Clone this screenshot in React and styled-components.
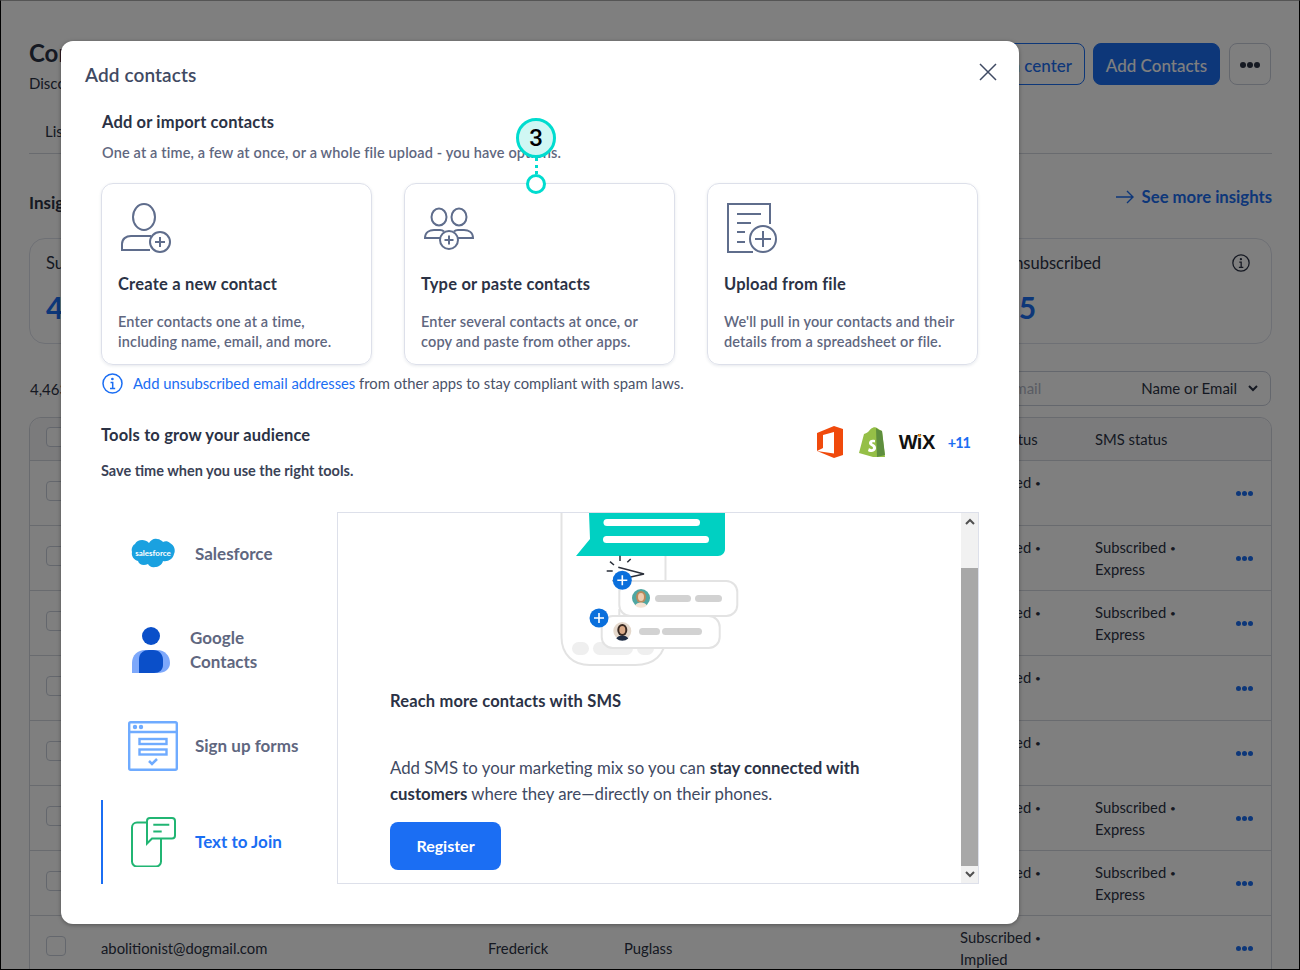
import React from "react";
import styled, { createGlobalStyle } from "styled-components";

const Global = createGlobalStyle`
  html, body { margin: 0; padding: 0; background: #fff; }
  body { font-family: Lato, "Noto Sans", "Liberation Sans", sans-serif; color: #2b3245; }
  * { box-sizing: border-box; }
`;

const Screen = styled.div`
  position: relative; width: 1300px; height: 970px; overflow: hidden;
  border: 1px solid #000; border-top-color: #555; padding: 0 27px 0 28px; background: #fff;
`;
const PageHeader = styled.header`
  display: flex; justify-content: space-between; height: 42px; margin-top: 42px; padding-right: 1px;
`;
const PageTitleBlock = styled.div` margin-top: -1px; `;
const PageTitle = styled.h1` margin: 0; font-size: 24px; line-height: 22px; font-weight: 700; color: #2b3245; `;
const PageSub = styled.p` margin: 9px 0 0; font-size: 15px; line-height: 20px; color: #2b3245; `;
const PageActions = styled.div` display: flex; gap: 8px; `;
const PageButton = styled.button`
  height: 42px; width: ${p => (p.$solid ? "127px" : "auto")}; border-radius: 8px; padding: 2px ${p => (p.$solid ? 0 : 12)}px 0;
  font: 500 17px Lato, sans-serif; white-space: nowrap;
  border: 1px solid #1b6ef3; color: ${p => (p.$solid ? "#fff" : "#1b6ef3")};
  background: ${p => (p.$solid ? "#1b6ef3" : "#fff")};
`;
const MoreButton = styled.button`
  width: 42px; height: 42px; margin-left: 1px; border: 1px solid #c9cedb; border-radius: 8px; background: #fff;
  display: flex; align-items: center; justify-content: center; gap: 1px; padding: 2px 0 0;
`;
const Dot = styled.i`
  width: ${p => p.$s || 6}px; height: ${p => p.$s || 6}px; border-radius: 50%; background: ${p => p.$c || "#2b3245"};
`;
const Tabs = styled.nav`
  height: 69px; padding: 34px 0 0 16px; border-bottom: 1px solid #d3d6df; font-size: 15px; line-height: 24px;
`;
const InsightsHead = styled.div` display: flex; justify-content: space-between; align-items: flex-start; margin-top: 31px; `;
const InsightsTitle = styled.h2` margin: 6px 0 0; font-size: 17px; line-height: 24px; font-weight: 700; `;
const SeeMore = styled.a`
  display: flex; align-items: center; gap: 8px; font-size: 16.7px; line-height: 24px; font-weight: 700; color: #1b6ef3;
`;
const StatGrid = styled.section` display: grid; grid-template-columns: repeat(4, 1fr); gap: 32px; margin-top: 23px; `;
const StatCard = styled.div`
  position: relative; height: 106px; padding: 12px 16px; border: 1px solid #dde0ea; border-radius: 16px;
`;
const StatLabel = styled.div` font-size: 16.5px; line-height: 24px; `;
const StatValue = styled.div` margin-top: 14px; font-size: 30px; line-height: 36px; font-weight: 700; letter-spacing: -1px; color: #1b6ef3; `;
const StatInfo = styled.span` position: absolute; right: 21px; top: 15px; display: flex; `;
const SearchRow = styled.div` display: flex; justify-content: space-between; margin-top: 27px; height: 35px; padding-right: 1px; `;
const CountText = styled.span` font-size: 15px; line-height: 36px; padding-left: 1px; `;
const SearchBox = styled.div`
  width: 383px; border: 1px solid #c9cedb; border-radius: 8px; display: flex; align-items: center;
  justify-content: space-between; padding: 0 12px 1px; font-size: 15px;
`;
const Placeholder = styled.span` color: #b4b9c7; `;
const SelectValue = styled.span` display: flex; align-items: center; gap: 11px; `;
const Table = styled.div` margin-top: 11px; border: 1px solid #d3d6df; border-radius: 12px 12px 0 0; `;
const Row = styled.div`
  display: grid; grid-template-columns: 71px 387px 136px 336px 135px 141px 1fr; align-items: center;
  height: ${p => (p.$head ? "43px" : "65px")}; border-bottom: 1px solid #d3d6df; font-size: 14.8px; line-height: 21px;
  background: ${p => (p.$head ? "#f6f7f9" : "#fff")}; border-radius: ${p => (p.$head ? "12px 12px 0 0" : "0")};
`;
const CheckBox = styled.span` width: 20px; height: 20px; margin: 0 0 4px 16px; border: 1px solid #c9cedb; border-radius: 4px; background: #fff; `;
const Cell = styled.span``;
const Bullet = styled.span` font-size: 10px; vertical-align: 1px; `;
const RowDots = styled.span` display: flex; gap: 1px; `;

const Overlay = styled.div`
  position: absolute; inset: 0; background: rgba(0, 0, 0, 0.5); padding: 40px 0 0 60px;
`;
const Modal = styled.div`
  position: relative; width: 958px; height: 883px; background: #fff; border-radius: 12px;
  box-shadow: 0 1px 4px rgba(0,0,0,.35);
`;
const ModalHeader = styled.div` display: flex; justify-content: space-between; align-items: center; height: 68px; padding: 0 22px 2px 24px; `;
const ModalTitle = styled.h2` margin: 0; font-size: 19px; font-weight: 600; letter-spacing: .1px; color: #3f4a63; `;
const CloseButton = styled.button` border: 0; background: none; padding: 0; margin-top: -5px; display: flex; `;
const ModalBody = styled.div` padding: 0 40px; `;
const SectionTitle = styled.h3`
  margin: 0; padding: 1px 0 0 ${p => (p.$inset ? 1 : 0)}px; font-size: 16.5px; line-height: 25px; font-weight: 700; letter-spacing: .15px; color: #2b3245;
`;
const SectionDesc = styled.p` margin: 8px 0 0; padding-left: 1px; font-size: 14.5px; line-height: 20px; font-weight: 600; letter-spacing: .15px; color: #5f6780; `;
const Options = styled.div` display: grid; grid-template-columns: repeat(3, 271px); gap: 32px; margin-top: 20px; `;
const OptionCard = styled.div`
  height: 182px; padding: 18px 16px 0; border: 1px solid #dde0ea; border-radius: 12px; box-shadow: 0 1px 3px rgba(60,70,110,.12);
`;
const OptionIcon = styled.svg` display: block; margin-left: 2px; `;
const OptionTitle = styled.h4` margin: 18px 0 0; padding-top: 1px; font-size: 16.5px; line-height: 23px; font-weight: 700; letter-spacing: .2px; color: #2b3245; `;
const OptionDesc = styled.p` margin: 16px 0 0; font-size: 14.5px; line-height: 20px; font-weight: 600; letter-spacing: .15px; color: #5f6780; `;
const InfoLine = styled.div` display: flex; align-items: center; gap: 10px; height: 22px; margin-top: 8px; padding: 0 0 2px 1px; font-size: 14.8px; color: #4a5268; `;
const InlineLink = styled.a` color: #1b6ef3; `;
const ToolsHead = styled.div` display: flex; justify-content: space-between; height: 36px; margin-top: 27px; `;
const Logos = styled.div` display: flex; align-items: center; gap: 14px; padding: 4px 9px 0 0; `;
const WixMark = styled.span` font: 700 20px "Liberation Sans", sans-serif; color: #111; letter-spacing: -.5px; margin: 1px 0 0 -1px; `;
const WixI = styled.span`
  position: relative;
  &::after { content: ""; position: absolute; left: 1.500px; top: 3px; width: 3px; height: 3px; border-radius: 50%; background: #f7941d; }
`;
const MoreCount = styled.span` font-size: 14.5px; font-weight: 700; letter-spacing: -1px; color: #1b6ef3; margin: 1px 0 0 -1px; `;
const ToolsDesc = styled.p` margin: 3px 0 0; font-size: 14.5px; line-height: 20px; font-weight: 700; color: #3a4256; `;
const Tools = styled.div` display: grid; grid-template-columns: 236px 642px; height: 372px; margin-top: 31px; `;
const ToolList = styled.div` display: flex; flex-direction: column; gap: 12px; `;
const ToolRow = styled.div`
  display: flex; align-items: center; height: 84px; border-left: 2px solid ${p => (p.$active ? "#1b6ef3" : "transparent")};
  font-size: 17px; font-weight: 700; color: ${p => (p.$active ? "#1b6ef3" : "#5f6780")};
`;
const ToolLabel = styled.span` line-height: 24px; `;
const ToolIcon = styled.span`
  display: flex; justify-content: center; width: 50px;
  margin: 0 ${p => (p.$tight ? 14 : 17)}px 0 ${p => (p.$tight ? 23 : 25)}px;
`;
const Panel = styled.div` display: flex; border: 1px solid #dde0ea; overflow: hidden; `;
const PanelContent = styled.div` flex: 1; min-width: 0; `;
const Art = styled.svg` display: block; margin-left: 222px; `;
const PanelText = styled.div` padding-left: 52px; `;
const PanelHeading = styled.h4` margin: 21px 0 0; padding-top: 1px; font-size: 16.5px; line-height: 23px; font-weight: 700; letter-spacing: .15px; color: #2b3245; `;
const PanelPara = styled.p` margin: 42px 0 0; font-size: 16.8px; line-height: 26px; color: #3f4a63; b { font-weight: 700; color: #2b3245; } `;
const RegisterButton = styled.button`
  display: block; width: 111px; height: 48px; margin-top: 15px; padding: 0 0 2px; border: 0; border-radius: 8px; background: #1b6ef3; color: #fff;
  font: 700 16px Lato, sans-serif;
`;
const ScrollBar = styled.div` flex: 0 0 17px; background: #f1f1f1; display: flex; flex-direction: column; justify-content: space-between; `;
const ScrollArrow = styled.span` height: 17px; display: flex; align-items: center; justify-content: center; `;
const ScrollTrack = styled.div` flex: 1; padding-top: 38px; `;
const ScrollThumb = styled.div` height: 298px; background: #a8a8a8; `;

const CalloutWrap = styled.div`
  position: absolute; left: 455px; top: 77px; width: 40px; display: flex; flex-direction: column; align-items: center;
`;
const CalloutBadge = styled.div`
  width: 40px; height: 40px; border-radius: 50%; border: 3px solid #00dccf; background: #d0f7f4; color: #000;
  font: 500 24px/34px Roboto, sans-serif; text-align: center; position: relative; z-index: 1;
`;
const CalloutLine = styled.div` height: 16px; border-left: 3px dotted #00dccf; `;
const CalloutDot = styled.div` width: 20px; height: 20px; border-radius: 50%; border: 3px solid #00dccf; background: #fff; `;

const rows = [
  { status: "Implied" }, { status: "Implied", sms: true }, { status: "Implied", sms: true }, { status: "Implied" },
  { status: "Implied" }, { status: "Implied", sms: true }, { status: "Implied", sms: true },
  { email: "abolitionist@dogmail.com", first: "Frederick", last: "Puglass", status: "Implied" },
];

const stroke = { fill: "none", stroke: "#5f6d8c", strokeWidth: 2 };

function InfoIcon({ size = 21, color = "#1b6ef3" }) {
  return (
    <svg width={size} height={size} viewBox="0 0 21 21" fill="none" stroke={color} strokeWidth="1.5">
      <circle cx="10.5" cy="10.5" r="9.5" />
      <path d="M8.5 9.5h2.2v6M8 15.5h5.2" />
      <circle cx="10.4" cy="6" r=".6" fill={color} />
    </svg>
  );
}

function Avatar({ cx, cy, bg, hair, skin, shirt }) {
  return (
    <g>
      <circle cx={cx} cy={cy} r="9" fill={bg} />
      <ellipse cx={cx} cy={cy - 1} rx="5" ry="6" fill={hair} />
      <ellipse cx={cx} cy={cy - 1} rx="3" ry="4" fill={skin} />
      <path d={`M${cx - 6} ${cy + 7.5}c2-4 10-4 12 0a9 9 0 0 1-12 0z`} fill={shirt} />
    </g>
  );
}

function PlusBadge({ cx, cy }) {
  return (
    <g>
      <circle cx={cx} cy={cy} r="9.5" fill="#0a6fdc" />
      <path d={`M${cx - 5} ${cy}h10M${cx} ${cy - 5}v10`} stroke="#fff" strokeWidth="1.6" />
    </g>
  );
}

function SmsArt() {
  return (
    <Art width="180" height="155" viewBox="0 0 180 155">
      <path d="M1.500 0v124c0 18 12 28 28 28h46c18 0 30-10 30-28V36" fill="none" stroke="#e3e3e3" strokeWidth="2" />
      <g fill="#efefef">
        <rect x="12" y="129" width="17" height="13" rx="6.5" />
        <rect x="33" y="129" width="40" height="13" rx="6.5" />
        <rect x="77" y="129" width="17" height="13" rx="6.5" />
      </g>
      <path d="M29 0h136v36c0 4-3 7-7 7H16l14-17z" fill="#00d0c2" />
      <rect x="43.500" y="6" width="96.500" height="7" rx="3.500" fill="#fff" />
      <rect x="43" y="23" width="106" height="7" rx="3.500" fill="#fff" />
      <path d="M60 42.700V48M50 48.700l4 3.300M67.300 49.300l3.400-3.300M46.700 58h6M58.300 54.300L84 61 52.700 68" fill="none" stroke="#2a2f3a" strokeWidth="1.5" />
      <rect x="59.300" y="68" width="118" height="35" rx="11" fill="#fff" stroke="#e3e3e3" strokeWidth="2" />
      <rect x="41.700" y="103" width="118" height="32" rx="11" fill="#fff" stroke="#e3e3e3" strokeWidth="2" />
      <path d="M59.300 96v7" stroke="#e3e3e3" strokeWidth="2" />
      <rect x="95" y="82" width="36" height="7" rx="3.5" fill="#d2d2d2" />
      <rect x="135" y="82" width="27" height="7" rx="3.5" fill="#d2d2d2" />
      <rect x="79" y="115" width="21" height="7" rx="3.5" fill="#d2d2d2" />
      <rect x="102" y="115" width="40" height="7" rx="3.5" fill="#d2d2d2" />
      <Avatar cx={81} cy={85} bg="#4fa7a2" hair="#b98a5c" skin="#f0cdb0" shirt="#f4e3d4" />
      <Avatar cx={62.3} cy={118} bg="#e4d8cc" hair="#3a2a22" skin="#d9a987" shirt="#1e2c44" />
      <PlusBadge cx={62.3} cy={67.3} />
      <PlusBadge cx={39} cy={105} />
    </Art>
  );
}

function Subscribed() {
  return <>Subscribed <Bullet>•</Bullet></>;
}

export default function App() {
  return (
    <>
      <Global />
      <Screen>
        <PageHeader>
          <PageTitleBlock>
            <PageTitle>Contacts</PageTitle>
            <PageSub>Discover and manage your contacts</PageSub>
          </PageTitleBlock>
          <PageActions>
            <PageButton>Action center</PageButton>
            <PageButton $solid>Add Contacts</PageButton>
            <MoreButton><Dot /><Dot /><Dot /></MoreButton>
          </PageActions>
        </PageHeader>
        <Tabs>Lists</Tabs>
        <InsightsHead>
          <InsightsTitle>Insights</InsightsTitle>
          <SeeMore>
            <svg width="18" height="14" viewBox="0 0 18 14" fill="none" stroke="#1b6ef3" strokeWidth="1.4"><path d="M0 7h17M11 1l6 6-6 6" /></svg>
            See more insights
          </SeeMore>
        </InsightsHead>
        <StatGrid>
          <StatCard><StatLabel>Subscribed</StatLabel><StatValue>4,123</StatValue></StatCard>
          <StatCard />
          <StatCard />
          <StatCard>
            <StatLabel>Unsubscribed</StatLabel><StatValue>25</StatValue>
            <StatInfo><InfoIcon size={18} color="#2b3245" /></StatInfo>
          </StatCard>
        </StatGrid>
        <SearchRow>
          <CountText>4,463 contacts</CountText>
          <SearchBox>
            <Placeholder>Search name or email</Placeholder>
            <SelectValue>
              Name or Email
              <svg width="10" height="7" viewBox="0 0 10 7" fill="none" stroke="#2b3245" strokeWidth="2"><path d="M1 1l4 4 4-4" /></svg>
            </SelectValue>
          </SearchBox>
        </SearchRow>
        <Table>
          <Row $head>
            <CheckBox /><Cell /><Cell /><Cell /><Cell>Email status</Cell><Cell>SMS status</Cell><Cell />
          </Row>
          {rows.map((r, i) => (
            <Row key={i}>
              <CheckBox />
              <Cell>{r.email}</Cell>
              <Cell>{r.first}</Cell>
              <Cell>{r.last}</Cell>
              <Cell><Subscribed /><br />{r.status}</Cell>
              <Cell>{r.sms ? <><Subscribed /><br />Express</> : null}</Cell>
              <RowDots><Dot $s={5} $c="#1b6ef3" /><Dot $s={5} $c="#1b6ef3" /><Dot $s={5} $c="#1b6ef3" /></RowDots>
            </Row>
          ))}
        </Table>

        <Overlay>
          <Modal>
            <ModalHeader>
              <ModalTitle>Add contacts</ModalTitle>
              <CloseButton aria-label="Close">
                <svg width="18" height="18" viewBox="0 0 18 18" stroke="#3f4a63" strokeWidth="1.5"><path d="M1 1l16 16M17 1L1 17" /></svg>
              </CloseButton>
            </ModalHeader>
            <ModalBody>
              <SectionTitle $inset>Add or import contacts</SectionTitle>
              <SectionDesc>One at a time, a few at once, or a whole file upload - you have options.</SectionDesc>
              <Options>
                <OptionCard>
                  <OptionIcon width="52" height="52" viewBox="0 0 52 52" {...stroke}>
                    <ellipse cx="24" cy="15" rx="11" ry="13" />
                    <path d="M30 48H2v-6c0-5 4-8 9-8h20" />
                    <circle cx="40" cy="40" r="10" />
                    <path d="M40 35v10M35 40h10" />
                  </OptionIcon>
                  <OptionTitle>Create a new contact</OptionTitle>
                  <OptionDesc>Enter contacts one at a time,<br />including name, email, and more.</OptionDesc>
                </OptionCard>
                <OptionCard>
                  <OptionIcon width="52" height="52" viewBox="0 0 52 52" {...stroke}>
                    <ellipse cx="16" cy="15" rx="7.5" ry="8.5" />
                    <ellipse cx="36" cy="15" rx="7.5" ry="8.5" />
                    <path d="M17 36H2c0-6 5-8 9-8h6c2 0 3 .5 4 1.500" />
                    <path d="M35 36h15c0-6-5-8-9-8h-6c-2 0-3 .5-4 1.500" />
                    <circle cx="26" cy="38" r="9" />
                    <path d="M26 33.500v9M21.500 38h9" />
                  </OptionIcon>
                  <OptionTitle>Type or paste contacts</OptionTitle>
                  <OptionDesc>Enter several contacts at once, or<br />copy and paste from other apps.</OptionDesc>
                </OptionCard>
                <OptionCard>
                  <OptionIcon width="52" height="52" viewBox="0 0 52 52" {...stroke}>
                    <path d="M44 22V2H2v48h25" />
                    <path d="M11 12h24M11 21h14M11 30h8M11 40h8" />
                    <circle cx="37" cy="37" r="13" />
                    <path d="M37 29v16M29 37h16" />
                  </OptionIcon>
                  <OptionTitle>Upload from file</OptionTitle>
                  <OptionDesc>We'll pull in your contacts and their<br />details from a spreadsheet or file.</OptionDesc>
                </OptionCard>
              </Options>
              <InfoLine>
                <InfoIcon />
                <span><InlineLink>Add unsubscribed email addresses</InlineLink> from other apps to stay compliant with spam laws.</span>
              </InfoLine>
              <ToolsHead>
                <SectionTitle>Tools to grow your audience</SectionTitle>
                <Logos>
                  <svg width="28" height="32" viewBox="0 0 28 32">
                    <path d="M1 7L18 0l9 3v26l-9 3L1 25l17 2.500V6L7 9v13l-6 3z" fill="#f04a0c" />
                  </svg>
                  <svg width="28" height="32" viewBox="0 0 28 32">
                    <path d="M1 27L6 8c3-1 4-2 5-3 2-3 6-5 8-3l3 2 2 1 3 26-12 0z" fill="#95bf47" />
                    <path d="M18 2l1 29 8-2-3-24-3-1z" fill="#5e8e3e" />
                    <path d="M12 7c0-4 4-6 6-4" fill="none" stroke="#95bf47" strokeWidth="1" />
                    <path d="M17 14c-3-1-6 0-6 3 0 3 4 3 4 5 0 2-3 1-4 0l-1 3c2 2 8 1 8-3 0-4-4-4-4-5 0-1 1-1 3-.5z" fill="#fff" />
                  </svg>
                  <WixMark>W<WixI>i</WixI>X</WixMark>
                  <MoreCount>+11</MoreCount>
                </Logos>
              </ToolsHead>
              <ToolsDesc>Save time when you use the right tools.</ToolsDesc>
              <Tools>
                <ToolList>
                  <ToolRow>
                    <ToolIcon>
                      <svg width="46" height="32" viewBox="0 0 46 32">
                        <path d="M19 5c2-3 5-5 8-4 3 0 5 2 6 3 2-1 5-1 7 1 4 2 6 7 4 11-1 5-6 8-11 7-1 4-5 6-8 6-3 1-6-1-7-3-4 2-9 1-10-3-4-1-7-5-6-9-1-4 1-7 3-8 2-4 9-6 14-1z" fill="#1aa1e0" />
                        <text x="23" y="17.500" textAnchor="middle" fontFamily="Lato, sans-serif" fontSize="8" fill="#fff">salesforce</text>
                      </svg>
                    </ToolIcon>
                    <ToolLabel>Salesforce</ToolLabel>
                  </ToolRow>
                  <ToolRow>
                    <ToolIcon $tight>
                      <svg width="40" height="46" viewBox="0 0 40 46">
                        <circle cx="20" cy="9" r="9" fill="#0a4fc9" />
                        <path d="M1 46V36c0-8 6-13 13-13h12c8 0 13 6 13 13 0 6-5 10-12 10z" fill="#7da8fb" />
                        <path d="M8 46V32c0-6 5-9 10-9h4c6 0 10 4 10 10v5c0 5-4 8-9 8z" fill="#0a4fc9" />
                      </svg>
                    </ToolIcon>
                    <ToolLabel>Google<br />Contacts</ToolLabel>
                  </ToolRow>
                  <ToolRow>
                    <ToolIcon>
                      <svg width="50" height="50" viewBox="0 0 50 50" fill="none" stroke="#6fabff" strokeWidth="2.4">
                        <rect x="1.200" y="1.200" width="47.600" height="47.600" rx="1.500" />
                        <path d="M1 11h48" />
                        <circle cx="7" cy="6" r="1" fill="#6fabff" />
                        <circle cx="13" cy="6" r="1" fill="#6fabff" />
                        <rect x="11.500" y="18" width="27" height="5" />
                        <rect x="11.500" y="28.500" width="27" height="5" />
                        <path d="M21 40l3 3 5-5" strokeWidth="2.500" />
                      </svg>
                    </ToolIcon>
                    <ToolLabel>Sign up forms</ToolLabel>
                  </ToolRow>
                  <ToolRow $active>
                    <ToolIcon>
                      <svg width="45" height="50" viewBox="0 0 45 50" fill="none" stroke="#21b573" strokeWidth="2">
                        <path d="M15 5.500H6a5 5 0 0 0-5 5V44.500a5 5 0 0 0 5 5h19a5 5 0 0 0 5-5V22" />
                        <path d="M16 26.500V4a3 3 0 0 1 3-3h22a3 3 0 0 1 3 3v14.500a3 3 0 0 1-3 3H21z" />
                        <path d="M22.300 7.800h16M22.300 14.500h8.400" />
                      </svg>
                    </ToolIcon>
                    <ToolLabel>Text to Join</ToolLabel>
                  </ToolRow>
                </ToolList>
                <Panel>
                  <PanelContent>
                    <SmsArt />
                    <PanelText>
                      <PanelHeading>Reach more contacts with SMS</PanelHeading>
                      <PanelPara>Add SMS to your marketing mix so you can <b>stay connected with<br />customers</b> where they are—directly on their phones.</PanelPara>
                      <RegisterButton>Register</RegisterButton>
                    </PanelText>
                  </PanelContent>
                  <ScrollBar>
                    <ScrollArrow><svg width="10" height="7" viewBox="0 0 10 7" fill="none" stroke="#505050" strokeWidth="2"><path d="M1 6l4-4 4 4" /></svg></ScrollArrow>
                    <ScrollTrack><ScrollThumb /></ScrollTrack>
                    <ScrollArrow><svg width="10" height="7" viewBox="0 0 10 7" fill="none" stroke="#505050" strokeWidth="2"><path d="M1 1l4 4 4-4" /></svg></ScrollArrow>
                  </ScrollBar>
                </Panel>
              </Tools>
            </ModalBody>
            <CalloutWrap>
              <CalloutBadge>3</CalloutBadge>
              <CalloutLine />
              <CalloutDot />
            </CalloutWrap>
          </Modal>
        </Overlay>
      </Screen>
    </>
  );
}
